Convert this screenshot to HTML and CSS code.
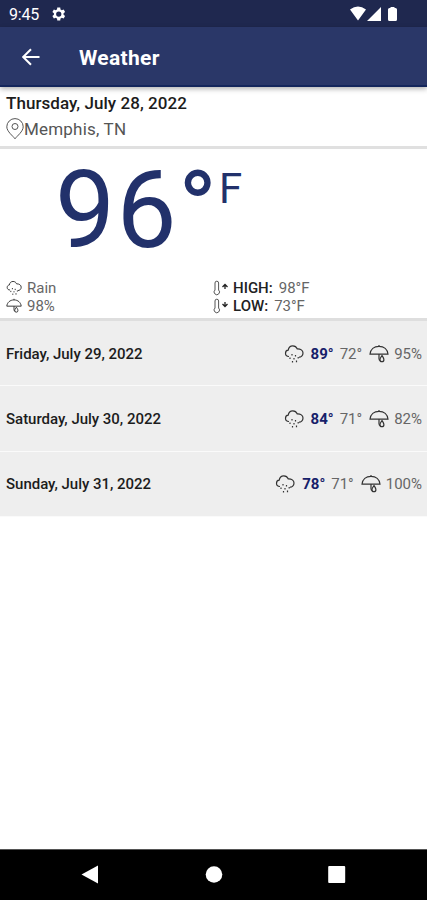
FILE: index.html
```
<!DOCTYPE html>
<html lang="en">
<head>
<meta charset="utf-8">
<title>Weather</title>
<link rel="stylesheet" href="styles.css">
</head>
<body>
<svg class="defs" aria-hidden="true">
  <symbol id="rain" viewBox="0 0 20 20">
    <path d="M5 12.500C2.800 12.500 1.500 11.200 1.500 9.300C1.500 7.500 2.700 6.300 4.200 6.200C4.600 3.400 6.300 1.800 8.800 1.800C11 1.800 12.500 3 13.200 4.800C16.500 4.600 19 6.500 19 9C19 11.600 17 13.200 15 13.200"/>
    <path d="M8 10v1.600M11.500 11v1.600M6 13.500v1.600M14.200 13v1.500M10 14v1.500M8.500 17v1.600M12.500 16.500v1.800"/>
  </symbol>
  <symbol id="umbrella" viewBox="0 0 20 20">
    <path d="M1 10.200C1.500 5.600 5 2.400 10 2.400S18.500 5.600 19 10.200ZM10 1v1.400M10 10.200v4.600q0 1.700 1.500 1.700"/>
    <path d="M13 11.500c1.100 1.700 1.900 2.800 1.900 4.200a2 2 0 0 1-4 0c0-1.400.9-2.500 2.100-4.200Z"/>
  </symbol>
  <symbol id="thermo" viewBox="0 0 8 16">
    <path d="M2 10V3a1.800 1.800 0 0 1 3.600 0v7a2.700 2.700 0 1 1-3.600 0Z"/>
  </symbol>
</svg>
<div class="screen">
  <header class="status">
    <span class="clock">9:45</span>
    <svg class="gear" viewBox="0 0 24 24"><path d="M19.400 13a7.500 7.500 0 0 0 0-2l2.100-1.600-2-3.500-2.500 1a7 7 0 0 0-1.700-1L15 3.200h-4L10.700 5.900a7 7 0 0 0-1.700 1l-2.500-1-2 3.500L6.600 11a7.500 7.500 0 0 0 0 2l-2.100 1.600 2 3.500 2.500-1a7 7 0 0 0 1.700 1l.3 2.700h4l.3-2.700a7 7 0 0 0 1.700-1l2.500 1 2-3.500ZM13 15.500a3.500 3.500 0 1 1 0-7 3.500 3.500 0 0 1 0 7Z"/></svg>
    <svg class="signals" viewBox="0 0 50 16"><path d="M1 3.500Q9-2.500 17 3.500L9 14.500ZM18 15L32 1V15ZM41.500 1h4v1h1q1.500 0 1.500 1.500v10q0 1.500-1.500 1.500h-6q-1.500 0-1.500-1.500V3.500q0-1.500 1.500-1.500h1Z"/></svg>
  </header>
  <nav class="appbar">
    <svg class="back" viewBox="0 0 18 18"><path d="M17.500 9H1.500M9 1.200L1.200 9L9 16.800"/></svg>
    <h1>Weather</h1>
  </nav>
  <section class="place">
    <h2>Thursday, July 28, 2022</h2>
    <p><svg class="pin" viewBox="0 0 18 22"><path d="M9 20.800C7 18 .8 13.500.8 8.800a8.200 8.200 0 0 1 16.400 0C17.200 13.500 11 18 9 20.800Z"/><circle cx="9" cy="8.500" r="3"/></svg><span>Memphis, TN</span></p>
  </section>
  <section class="now">
    <div class="temp"><span class="value">96</span><span class="degree">°</span><span class="unit">F</span></div>
    <div class="details">
      <div class="col">
        <p><svg class="mini"><use href="#rain"/></svg><span>Rain</span></p>
        <p><svg class="mini"><use href="#umbrella"/></svg><span>98%</span></p>
      </div>
      <div class="col">
        <p><svg class="range" viewBox="0 0 16 16"><use href="#thermo" width="8" height="16"/><path class="arrow" d="M12 9V5M9.500 7L12 4.500l2.500 2.500"/></svg><b>HIGH:</b><span>98°F</span></p>
        <p><svg class="range" viewBox="0 0 16 16"><use href="#thermo" width="8" height="16"/><path class="arrow" d="M12 4v4M9.500 6L12 8.500l2.500-2.500"/></svg><b>LOW:</b><span>73°F</span></p>
      </div>
    </div>
  </section>
  <ul class="days">
    <li><b>Friday, July 29, 2022</b><svg class="ic"><use href="#rain"/></svg><strong>89°</strong><span class="min">72°</span><svg class="ic"><use href="#umbrella"/></svg><span class="pct">95%</span></li>
    <li><b>Saturday, July 30, 2022</b><svg class="ic"><use href="#rain"/></svg><strong>84°</strong><span class="min">71°</span><svg class="ic"><use href="#umbrella"/></svg><span class="pct">82%</span></li>
    <li><b>Sunday, July 31, 2022</b><svg class="ic"><use href="#rain"/></svg><strong>78°</strong><span class="min">71°</span><svg class="ic"><use href="#umbrella"/></svg><span class="pct">100%</span></li>
  </ul>
  <footer class="sysnav">
    <svg viewBox="0 0 20 20"><path d="M1.500 9.500L18 .5V18.500Z"/></svg>
    <svg viewBox="0 0 20 20"><circle cx="10" cy="9.500" r="8.300"/></svg>
    <svg viewBox="0 0 20 20"><rect x="1.200" y="1" width="17" height="17" rx="1"/></svg>
  </footer>
</div>
</body>
</html>
```
FILE: styles.css
```
* { box-sizing: border-box; margin: 0; padding: 0; }
body { background: #fff; font-family: Roboto, "Liberation Sans", sans-serif; color: #1c1c1c; }
svg { display: block; flex: none; fill: none; stroke: #333; stroke-width: 1; }
.defs { position: absolute; width: 0; height: 0; }
.screen { width: 427px; height: 900px; display: flex; flex-direction: column; overflow: hidden; }
.status { height: 27px; flex: none; display: flex; align-items: center; background: #1f284f; color: #fff; padding: 0 28px 0 9px; }
.clock { font-size: 16px; width: 40px; letter-spacing: -.2px; padding-top: 1px; }
.gear { width: 18px; height: 18px; fill: #fff; stroke: none; }
.signals { width: 50px; height: 16px; margin-left: auto; fill: #fff; stroke: none; }
.appbar { height: 60px; flex: none; display: flex; align-items: center; background: #2a3768; border-bottom: 2px solid #14265c; padding: 2px 0 0 22px; box-shadow: 0 2px 5px rgba(0,0,0,.3); z-index: 1; color: #fff; }
.back { width: 18px; height: 18px; stroke: #fff; stroke-width: 2; margin-right: 39px; }
h1 { font-size: 21px; line-height: 26px; font-weight: 700; padding-top: 2px; letter-spacing: .3px; }
.place { height: 62px; flex: none; padding: 4px 6px 0; border-bottom: 3px solid #e0e0e0; }
h2 { font-size: 17px; line-height: 25px; font-weight: 500; letter-spacing: .05px; white-space: nowrap; }
.place p { display: flex; align-items: center; font-size: 17px; line-height: 26px; letter-spacing: .2px; color: #555; }
.pin { width: 18px; height: 22px; stroke: #555; }
.now { height: 172px; flex: none; border-bottom: 3px solid #dedede; padding-top: 12px; }
.temp { height: 118px; display: flex; padding-left: 55px; color: #22316b; line-height: 100px; }
.value { font-size: 107px; letter-spacing: 1.300px; }
.degree { font-size: 105px; }
.unit { font-size: 42px; line-height: 56px; margin-left: 2px; }
.details { display: flex; padding-left: 6px; }
.col { width: 207px; }
.col p { height: 18px; display: flex; align-items: center; font-size: 15px; line-height: 18px; color: #666; }
.col b { color: #222; font-weight: 500; margin-right: 6px; }
.mini { width: 16px; height: 16px; margin-right: 5px; stroke-width: 1.200; }
.mini use, .ic use { width: 100%; height: 100%; }
.range { width: 16px; height: 16px; margin-right: 4px; stroke: #555; }
.arrow { stroke: #222; stroke-width: 1.300; }
.days { list-style: none; flex: 1; }
.days li { height: 65.300px; display: flex; align-items: center; background: #eee; border-bottom: 1px solid #fafafa; padding: 1px 5px 0 6px; font-size: 15px; }
.days b { font-weight: 500; letter-spacing: -.02px; margin-right: auto; white-space: nowrap; }
.ic { width: 20px; height: 20px; stroke-width: 1.200; }
.days strong { color: #17206a; font-weight: 700; margin: 0 6px 0 7px; }
.min { color: #666; margin-right: 7px; }
.pct { color: #666; margin-left: 5px; }
.sysnav { height: 51px; flex: none; background: #000; border-top: 1px solid #555; display: flex; justify-content: space-between; align-items: center; padding: 0 80px; }
.sysnav svg { width: 20px; height: 20px; fill: #fff; stroke: none; }
```
